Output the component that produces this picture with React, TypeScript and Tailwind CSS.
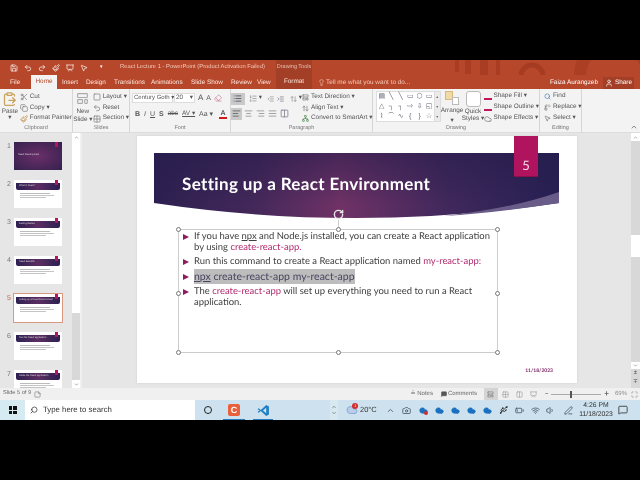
import {
  AlignCenter, AlignJustify, AlignLeft, AlignRight, ArrowUpDown, ChevronDown, ChevronUp, ClipboardPaste,
  Copy, Eraser, Grid2x2, Indent, LayoutTemplate, Lightbulb, List, ListOrdered, MessageSquare, MousePointer2,
  Outdent, Paintbrush, PenLine, Redo2, Replace, RotateCw, Save, Scissors, Search, Square, StickyNote, Undo2, User,
  Volume1, Wifi, BatteryLow, Cloud, Columns2, Presentation, Maximize, Network, Usb, Camera,
} from 'lucide-react'

const tabs = [
  { name: 'Insert', width: 'w-[24px]' },
  { name: 'Design', width: 'w-[28px]' },
  { name: 'Transitions', width: 'w-[37px]' },
  { name: 'Animations', width: 'w-[40px]' },
  { name: 'Slide Show', width: 'w-[40px]' },
  { name: 'Review', width: 'w-[26px]' },
  { name: 'View', width: 'w-[19px]' },
]

function Tiny({ children, className = '' }: { children: React.ReactNode; className?: string }) {
  return <span className={`text-[6.4px] leading-none text-[#555] whitespace-nowrap ${className}`}>{children}</span>
}

function Group({ width, label, children }: { width: string; label: string; children: React.ReactNode }) {
  return (
    <div className={`${width} shrink-0 h-full flex flex-col border-r border-[#d6d6d6]`}>
      <div className="flex-1 flex min-h-0">{children}</div>
      <div className="h-[8px] text-center text-[5.5px] leading-[8px] text-[#777]">{label}</div>
    </div>
  )
}

function SmallRow({ icon, label }: { icon: React.ReactNode; label: string }) {
  return (
    <div className="h-[11px] flex items-center gap-[2px]">
      {icon}
      <Tiny>{label}</Tiny>
    </div>
  )
}

function Ribbon() {
  const ic = 'w-[8px] h-[8px] text-[#777]'
  const pi = 'w-[7px] h-[7px] text-[#666]'
  return (
    <div className="h-[44px] bg-[#f3f3f3] flex border-b border-[#dcdcdc]">
      <Group width="w-[73px]" label="Clipboard">
        <div className="w-[22px] flex flex-col items-center pt-[2px]">
          <ClipboardPaste className="w-[15px] h-[16px] text-[#c9a35a]" />
          <Tiny className="mt-[2px]">Paste</Tiny>
          <Tiny>▾</Tiny>
        </div>
        <div className="flex flex-col pt-[3px]">
          <SmallRow icon={<Scissors className={ic} />} label="Cut" />
          <SmallRow icon={<Copy className={ic} />} label="Copy  ▾" />
          <SmallRow icon={<Paintbrush className="w-[8px] h-[8px] text-[#b8893a]" />} label="Format Painter" />
        </div>
      </Group>
      <Group width="w-[57px]" label="Slides">
        <div className="w-[21px] flex flex-col items-center pt-[3px]">
          <LayoutTemplate className="w-[15px] h-[13px] text-[#aaa]" />
          <Tiny className="mt-[4px]">New</Tiny>
          <Tiny className="mt-[2px]">Slide ▾</Tiny>
        </div>
        <div className="flex flex-col pt-[3px]">
          <SmallRow icon={<Square className={ic} />} label="Layout ▾" />
          <SmallRow icon={<Undo2 className={ic} />} label="Reset" />
          <SmallRow icon={<Grid2x2 className={ic} />} label="Section ▾" />
        </div>
      </Group>
      <Group width="w-[101px]" label="Font">
        <div className="flex flex-col pl-[2px] pt-[4px] gap-[5px]">
          <div className="flex items-center h-[10px]">
            <div className="w-[41px] h-[10px] bg-white border border-[#ddd] flex items-center px-[1px]"><Tiny className="text-[6px]">Century Goth ▾</Tiny></div>
            <div className="w-[21px] h-[10px] bg-white border border-[#ddd] flex items-center px-[1px] ml-[1px]"><Tiny>20</Tiny><Tiny className="ml-auto">▾</Tiny></div>
            <Tiny className="ml-[3px] text-[8px]">A</Tiny>
            <Tiny className="ml-[3px] text-[7px]">A</Tiny>
            <Eraser className="w-[8px] h-[8px] text-[#c79] ml-[3px]" />
          </div>
          <div className="flex items-center gap-[4px] pl-[3px] h-[12px]">
            <Tiny className="font-bold text-[7px] text-[#333]">B</Tiny>
            <Tiny className="italic text-[7px] text-[#333]">I</Tiny>
            <Tiny className="underline text-[7px] text-[#333]">U</Tiny>
            <Tiny className="font-bold text-[7px] text-[#444]">S</Tiny>
            <Tiny className="line-through">abc</Tiny>
            <Tiny className="underline">AV ▾</Tiny>
            <Tiny className="text-[7px]">Aa ▾</Tiny>
            <div className="flex items-center flex-col ml-[2px]"><Tiny className="font-bold text-[7px] text-[#333]">A</Tiny><div className="w-[8px] h-[2px] bg-[#d31a1a]" /></div>
          </div>
        </div>
      </Group>
      <Group width="w-[142px]" label="Paragraph">
        <div className="flex flex-col pt-[3px] gap-[2px] w-[71px]">
          <div className="flex items-center h-[13px] gap-[2px]">
            <div className="w-[15px] h-[12px] bg-[#c9c9c9] flex items-center justify-center"><List className="w-[9px] h-[9px] text-[#445]" /></div>
            <ListOrdered className="w-[9px] h-[9px] text-[#888] ml-[2px]" /><Tiny>▾</Tiny>
            <Outdent className="w-[8px] h-[8px] text-[#888] ml-[3px]" />
            <Indent className="w-[8px] h-[8px] text-[#667] ml-[1px]" />
            <ArrowUpDown className="w-[8px] h-[8px] text-[#888] ml-[3px]" /><Tiny>▾</Tiny>
          </div>
          <div className="flex items-center h-[13px] gap-[2px]">
            <div className="w-[11px] h-[12px] bg-[#c9c9c9] flex items-center justify-center"><AlignLeft className="w-[9px] h-[9px] text-[#555]" /></div>
            <AlignCenter className="w-[9px] h-[9px] text-[#888]" />
            <AlignRight className="w-[9px] h-[9px] text-[#888] ml-[1px]" />
            <AlignJustify className="w-[9px] h-[9px] text-[#888] ml-[1px]" />
            <Columns2 className="w-[9px] h-[9px] text-[#778] ml-[1px]" />
          </div>
        </div>
        <div className="flex flex-col pt-[3px]">
          <SmallRow icon={<LayoutTemplate className={pi} />} label="Text Direction ▾" />
          <SmallRow icon={<ArrowUpDown className={pi} />} label="Align Text ▾" />
          <SmallRow icon={<Network className="w-[7px] h-[7px] text-[#4a8a4a]" />} label="Convert to SmartArt ▾" />
        </div>
      </Group>
      <Group width="w-[167px]" label="Drawing">
        <div className="w-[64px] h-[31px] ml-[3px] mt-[2px] bg-white border border-[#ddd] grid grid-cols-6 text-[7px] leading-[10px] text-center text-[#667]">
          {['▤', '╲', '╲', '▭', '⬡', '▭', '△', '┐', '┐', '⇨', '⇩', '◱', '⌇', '⌒', '∿', '{', '}', '☆'].map((g, i) => (
            <span key={i}>{g}</span>
          ))}
        </div>
        <div className="w-[6px] h-[31px] mt-[2px] bg-[#eaeaea] border-y border-r border-[#ddd] flex flex-col items-center justify-between text-[4px] leading-[10px] text-[#666]">
          <span>▴</span><span>▾</span><span>▾</span>
        </div>
        <div className="w-[21px] ml-[1px] flex flex-col items-center pt-[2px]">
          <div className="flex w-[14px] h-[15px] items-start">
            <div className="w-[8px] h-[9px] bg-[#f2d9a8] border border-[#d8b878]" />
            <div className="w-[7px] h-[8px] -ml-[1px] mt-[6px] bg-white border border-[#bbb]" />
          </div>
          <Tiny className="mt-[3px]">Arrange</Tiny>
          <Tiny className="mt-[3px]">▾</Tiny>
        </div>
        <div className="w-[21px] flex flex-col items-center pt-[2px]">
          <div className="w-[15px] h-[16px] bg-white border border-[#bbb] rounded-[3px]" />
          <Tiny className="mt-[2px]">Quick</Tiny>
          <Tiny className="mt-[1px]">Styles ▾</Tiny>
        </div>
        <div className="flex flex-col pt-[2px]">
          <SmallRow icon={<div className="w-[8px] h-[7px] border-b-2 border-[#c2185b]" />} label="Shape Fill ▾" />
          <SmallRow icon={<div className="w-[8px] h-[7px] border-b-2 border-[#c2185b]" />} label="Shape Outline ▾" />
          <SmallRow icon={<Cloud className={ic} />} label="Shape Effects ▾" />
        </div>
      </Group>
      <Group width="w-[42px]" label="Editing">
        <div className="flex flex-col pl-[4px] pt-[2px]">
          <SmallRow icon={<Search className="w-[7px] h-[7px] text-[#3a6fb0]" />} label="Find" />
          <SmallRow icon={<Replace className={pi} />} label="Replace ▾" />
          <SmallRow icon={<MousePointer2 className={pi} />} label="Select ▾" />
        </div>
      </Group>
      <div className="flex-1 flex items-end justify-end pr-[2px] pb-[1px]">
        <ChevronUp className="w-[8px] h-[8px] text-[#555]" />
      </div>
    </div>
  )
}

function Banner({ className }: { className: string }) {
  return (
    <svg viewBox="0 0 405 66" className={className} preserveAspectRatio="none">
      <defs>
        <linearGradient id="bannerFill" x1="0" x2="1" y1="0" y2="0">
          <stop offset="0" stopColor="#2c2050" />
          <stop offset="0.25" stopColor="#44285a" />
          <stop offset="0.46" stopColor="#703266" />
          <stop offset="0.72" stopColor="#41285c" />
          <stop offset="1" stopColor="#262052" />
        </linearGradient>
        <linearGradient id="bannerShade" x1="0" x2="0" y1="0" y2="1">
          <stop offset="0" stopColor="#241c4a" stopOpacity="0.55" />
          <stop offset="0.8" stopColor="#241c4a" stopOpacity="0" />
        </linearGradient>
      </defs>
      <path d="M0 0H405V50Q200 80 0 50Z" fill="url(#bannerFill)" />
      <path d="M0 0H405V50Q200 80 0 50Z" fill="url(#bannerShade)" />
      <path d="M405 39V50Q340 60 290 63Q360 55 405 39Z" fill="#6a5c88" />
    </svg>
  )
}

function Thumb({ n, active, dark, title }: { n: number; active?: boolean; dark?: boolean; title: string }) {
  return (
    <div className="h-[38px] flex shrink-0">
      <span className={`w-[14px] pl-[7px] text-[7px] leading-[10px] ${active ? 'text-[#c0694a]' : 'text-[#777]'}`}>{n}</span>
      <div className={`relative w-[48px] h-[28px] ${dark ? 'bg-radial from-[#6a2f68] to-[#35204f]' : 'bg-white'} ${active ? 'outline outline-1 outline-[#d9987f]' : ''}`}>
        {!dark && (
          <>
            <div className="ml-[2px] mt-[3px] w-[44px] h-[7px] bg-linear-to-r from-[#2c2050] via-[#5c2d62] to-[#2c2050] rounded-b-[2px] text-[2.4px] leading-[6px] text-[#ddd] pl-[3px] whitespace-nowrap overflow-hidden">{title}</div>
            <div className="ml-[6px] mt-[3px] w-[30px] h-[1px] bg-[#bbb]" />
            <div className="ml-[6px] mt-[1px] w-[34px] h-[1px] bg-[#c4c4c4]" />
            <div className="ml-[6px] mt-[1px] w-[26px] h-[1px] bg-[#c4c4c4]" />
          </>
        )}
        {dark && <div className="pl-[4px] pt-[11px] text-[2.4px] leading-[3px] text-[#ddd]">{title}</div>}
        <div className="absolute right-[4px] top-0 w-[3px] h-[5px] bg-[#b5135f]" />
      </div>
    </div>
  )
}

function Handle({ className }: { className: string }) {
  return <div className={`absolute w-[5px] h-[5px] rounded-full bg-white border border-[#777] ${className}`} />
}

function Item({ children }: { children: React.ReactNode }) {
  return (
    <div className="flex mb-[4px] whitespace-nowrap">
      <span className="w-[12px] h-[10px] flex items-center">
        <svg viewBox="0 0 6 6" className="w-[6px] h-[6px] ml-[1px]"><path d="M0 0L6 3L0 6Z" fill="#8e1c5e" /></svg>
      </span>
      <div>{children}</div>
    </div>
  )
}

function Slide() {
  const accent = 'text-[#b02a6e]'
  return (
    <div className="relative w-[440px] h-[247px] bg-white shadow-[0_0_2px_#ccc] font-['Lato',sans-serif]">
      <Banner className="absolute left-[17px] top-[17px] w-[405px] h-[66px]" />
      <div className="absolute left-[377px] top-0 w-[24px] h-[41px] bg-[#b0145f] flex items-end justify-center pb-[4px] text-[13px] leading-none text-[#f5d9e6] border-b border-[#8c1049]">5</div>
      <div className="relative z-10 pl-[45px] pt-[38px] h-[93px] text-[17px] tracking-[0.35px] leading-[20px] font-bold text-white whitespace-nowrap">Setting up a React Environment</div>
      <div className="relative z-10 ml-[41px] w-[320px] h-[124px] border border-[#ccc] pt-[2px] pl-[3px] text-[9.45px] leading-[10.5px] text-[#404040]">
        <RotateCw className="absolute left-[154px] -top-[21px] w-[11px] h-[11px] text-[#e8e8e8]" strokeWidth={3} />
        <div className="absolute left-[159px] -top-[10px] w-px h-[10px] bg-[#ccc]" />
        <Handle className="-left-[3px] -top-[3px]" />
        <Handle className="left-[157px] -top-[3px]" />
        <Handle className="-right-[3px] -top-[3px]" />
        <Handle className="-left-[3px] top-[61px]" />
        <Handle className="-right-[3px] top-[61px]" />
        <Handle className="-left-[3px] -bottom-[3px]" />
        <Handle className="left-[157px] -bottom-[3px]" />
        <Handle className="-right-[3px] -bottom-[3px]" />
        <Item>If you have <u>npx</u> and Node.js installed, you can create a React application<br />by using <span className={accent}>create-react-app.</span></Item>
        <Item><span>Run this command to create a React application named </span><span className={accent}>my-react-app:</span></Item>
        <Item><span className="bg-[#bdbdbd] text-[#4a4560] text-[10.5px] py-[1.5px]"><u>npx</u> create-react-app my-react-app</span></Item>
        <Item>The <span className={accent}>create-react-app</span> will set up everything you need to run a React<br />application.</Item>
      </div>
      <div className="absolute right-[24px] bottom-[9px] text-[5px] leading-none font-bold text-[#7a2060]">11/18/2023</div>
    </div>
  )
}

function Taskbar() {
  const tray = 'w-[9px] h-[9px] text-[#3a4a55]'
  const cloud = 'w-[9px] h-[9px] text-[#1a6fc0] fill-[#1a6fc0]'
  return (
    <div className="h-[20px] bg-[#cde2ee] flex items-center">
      <div className="w-[25px] h-full bg-[#d6eaf2] flex items-center justify-center">
        <div className="grid grid-cols-2 gap-px w-[8px] h-[8px]">
          <i className="bg-[#111]" /><i className="bg-[#111]" /><i className="bg-[#111]" /><i className="bg-[#111]" />
        </div>
      </div>
      <div className="w-[170px] h-full bg-white flex items-center pl-[5px] gap-[5px]">
        <Search className="w-[8px] h-[8px] text-[#222] -scale-x-100" />
        <span className="text-[7.8px] leading-none text-[#333] whitespace-nowrap">Type here to search</span>
      </div>
      <div className="w-[8px] h-[8px] ml-[9px] rounded-full border border-[#222]" />
      <div className="relative w-[22px] h-full ml-[11px] flex items-center justify-center">
        <div className="w-[12px] h-[12px] rounded-[2px] bg-[#e8603c] text-white text-[9px] leading-[12px] font-bold text-center">C</div>
        <div className="absolute bottom-0 inset-x-0 h-[1px] bg-[#2a7ab8]" />
      </div>
      <div className="relative w-[20px] h-full ml-[8px] flex items-center justify-center">
        <svg viewBox="0 0 24 24" className="w-[13px] h-[13px]">
          <path d="M17 2l5 2.5v15L17 22 7 13l-4 3-2-1.5L5 12 1 9.5 3 8l4 3z M17 7l-6 5 6 5z" fill="#1f7fc4" fillRule="evenodd" />
        </svg>
        <div className="absolute bottom-0 inset-x-0 h-[1px] bg-[#2a7ab8]" />
      </div>
      <div className="ml-auto flex items-center h-full">
        <div className="w-[8px] h-full flex flex-col items-center justify-center bg-[#d8e8f0]">
          <ChevronUp className="w-[6px] h-[6px] text-[#444]" />
          <ChevronDown className="w-[6px] h-[6px] text-[#444]" />
        </div>
        <div className="relative ml-[8px]">
          <Cloud className="w-[12px] h-[12px] text-[#8aa9d6] fill-[#b8cde8]" />
          <div className="absolute -top-[1px] right-0 w-[6px] h-[6px] rounded-full bg-[#d12c2c] text-white text-[4px] leading-[6px] text-center">1</div>
        </div>
        <span className="ml-[2px] w-[24px] text-[7.5px] leading-none text-[#333]">20°C</span>
        <ChevronUp className={`${tray} ml-[2px]`} />
        <Camera className={`${tray} ml-[7px]`} />
        <div className="relative ml-[8px]">
          <Cloud className={cloud} />
          <div className="absolute right-0 bottom-0 w-[4px] h-[4px] rounded-full bg-[#c93030]" />
        </div>
        <Cloud className={`${cloud} ml-[7px]`} />
        <Cloud className={`${cloud} ml-[7px]`} />
        <Cloud className={`${cloud} ml-[7px]`} />
        <Cloud className={`${cloud} ml-[7px]`} />
        <Usb className="w-[9px] h-[10px] text-[#111] ml-[7px]" />
        <BatteryLow className={`${tray} ml-[7px]`} />
        <Wifi className={`${tray} ml-[7px]`} />
        <Volume1 className={`${tray} ml-[6px]`} />
        <PenLine className={`${tray} ml-[9px]`} />
        <div className="w-[42px] ml-[2px] flex flex-col items-center text-[6.8px] leading-[9px] text-[#333]">
          <span>4:26 PM</span>
          <span className="whitespace-nowrap">11/18/2023</span>
        </div>
        <MessageSquare className="w-[10px] h-[10px] text-[#333] ml-[1px] mr-[12px]" />
      </div>
    </div>
  )
}

export default function App() {
  return (
    <div className="w-[640px] h-[480px] bg-black flex flex-col overflow-hidden blur-[0.3px] [text-rendering:geometricPrecision] font-['Liberation_Sans',sans-serif]">
      <div className="h-[60px] shrink-0" />
      <div className="relative h-[15px] shrink-0 bg-[#b7472a] flex items-center text-[#f2c9bb]">
        <svg viewBox="0 0 230 29" className="absolute right-0 top-0 w-[230px] h-[29px] z-0">
          <circle cx="204" cy="16" r="34" fill="none" stroke="#ab3f24" strokeWidth="12" />
          <circle cx="122" cy="16" r="11" fill="none" stroke="#a53c22" strokeWidth="5" />
          <path d="M45 0h4v12h-4zM55 0h6v14h-6zM70 0h8v20h-8zM86 0h4v16h-4z" fill="#a83d23" />
        </svg>
        <div className="flex items-center gap-[6px] pl-[10px] w-[118px] shrink-0 text-white">
          <Save className="w-[8px] h-[8px]" />
          <Undo2 className="w-[8px] h-[8px]" />
          <Redo2 className="w-[8px] h-[8px]" />
          <Paintbrush className="w-[8px] h-[8px]" />
          <Presentation className="w-[8px] h-[8px]" />
          <MousePointer2 className="w-[8px] h-[8px]" />
          <span className="text-[5px] leading-none ml-[6px]">▾</span>
        </div>
        <span className="relative w-[158px] shrink-0 text-[5.8px] leading-none pl-[2px] whitespace-nowrap">React Lecture 1 - PowerPoint (Product Activation Failed)</span>
        <div className="relative w-[36px] h-full bg-[#a33f26] flex items-center justify-center text-[5.5px] leading-none whitespace-nowrap text-[#e6bdb0]">Drawing Tools</div>
      </div>
      <div className="relative h-[14px] shrink-0 bg-[#b7472a] flex items-end text-[6.4px] leading-none text-[#fbe5dc] whitespace-nowrap">
        <span className="w-[31px] pl-[10px] pb-[3px]">File</span>
        <span className="w-[26px] h-[14px] bg-[#f3f3f3] text-[#b7472a] text-center pt-[4px]">Home</span>
        <span className="w-[5px]" />
        {tabs.map((t) => (
          <span key={t.name} className={`${t.width} pb-[3px]`}>{t.name}</span>
        ))}
        <span className="w-[36px] h-[14px] bg-[#a33f26] text-center pt-[4px]">Format</span>
        <Lightbulb className="relative w-[7px] h-[7px] ml-[6px] mb-[3px] text-[#f5c9b8]" />
        <span className="relative ml-[1px] pb-[3px] text-[#f5c9b8]">Tell me what you want to do...</span>
        <span className="relative ml-auto pb-[3px] text-white">Faiza Aurangzeb</span>
        <div className="relative ml-[5px] mr-[6px] h-[12px] px-[2px] bg-[#a33f26] flex items-center gap-[2px] text-white">
          <User className="w-[8px] h-[8px]" />Share
        </div>
      </div>
      <Ribbon />
      <div className="h-[255px] shrink-0 flex bg-[#e6e6e6] overflow-hidden">
        <div className="w-[72px] pt-[9px] flex flex-col overflow-hidden shrink-0">
          <Thumb n={1} dark title="React Development" />
          <Thumb n={2} title="What is React?" />
          <Thumb n={3} title="Getting started" />
          <Thumb n={4} title="React Benefits" />
          <Thumb n={5} active title="Setting up a React Environment" />
          <Thumb n={6} title="Run the React application" />
          <Thumb n={7} title="Inside the React application" />
        </div>
        <div className="w-[8px] shrink-0 bg-[#d8d8d8] flex flex-col">
          <div className="h-[8px] bg-white flex items-center justify-center"><ChevronUp className="w-[5px] h-[5px] text-[#444]" /></div>
          <div className="h-[172px] bg-white" />
          <div className="flex-1" />
          <div className="h-[8px] bg-white flex items-center justify-center"><ChevronDown className="w-[5px] h-[5px] text-[#444]" /></div>
        </div>
        <div className="w-[2px] shrink-0 bg-[#f0f0f0]" />
        <div className="flex-1 pl-[55px] pt-[3px]"><Slide /></div>
        <div className="w-[9px] shrink-0 bg-[#d8d8d8] flex flex-col items-center">
          <div className="w-full h-[8px] bg-white flex items-center justify-center"><ChevronUp className="w-[5px] h-[5px] text-[#444]" /></div>
          <div className="w-full h-[22px] mt-[94px] bg-white" />
          <div className="flex-1" />
          <div className="w-full h-[7px] bg-white flex items-center justify-center"><ChevronDown className="w-[5px] h-[5px] text-[#444]" /></div>
          <span className="text-[6px] leading-[9px] text-[#444]">±</span>
          <span className="text-[6px] leading-[9px] text-[#444] mb-[1px]">∓</span>
        </div>
      </div>
      <div className="h-[12px] shrink-0 bg-[#f0f0f0] flex items-center text-[6px] leading-none text-[#666] whitespace-nowrap">
        <span className="pl-[3px] w-[34px] text-[5.6px]">Slide 5 of 9</span>
        <StickyNote className="w-[7px] h-[7px] text-[#777]" />
        <div className="ml-auto flex items-center h-full">
          <span>≟ Notes</span>
          <MessageSquare className="w-[6px] h-[6px] ml-[8px] mr-[1px] fill-[#555] text-[#555]" />
          <span className="mr-[7px]">Comments</span>
          <div className="w-[14px] h-full bg-[#d4d4d4] flex items-center justify-center"><LayoutTemplate className="w-[7px] h-[7px] text-[#777]" /></div>
          <Grid2x2 className="w-[7px] h-[7px] text-[#999] ml-[4px]" />
          <Columns2 className="w-[7px] h-[7px] text-[#999] ml-[7px]" />
          <Presentation className="w-[7px] h-[7px] text-[#999] ml-[7px]" />
          <span className="ml-[8px] font-bold">–</span>
          <div className="relative w-[50px] h-px bg-[#aaa] mx-[3px]">
            <div className="absolute left-[19px] -top-[3px] w-[2px] h-[7px] bg-[#555]" />
          </div>
          <span className="font-bold text-[8px]">+</span>
          <span className="ml-[6px] text-[#888]">69%</span>
          <Maximize className="w-[7px] h-[7px] text-[#888] ml-[4px] mr-[2px]" />
        </div>
      </div>
      <Taskbar />
    </div>
  )
}
